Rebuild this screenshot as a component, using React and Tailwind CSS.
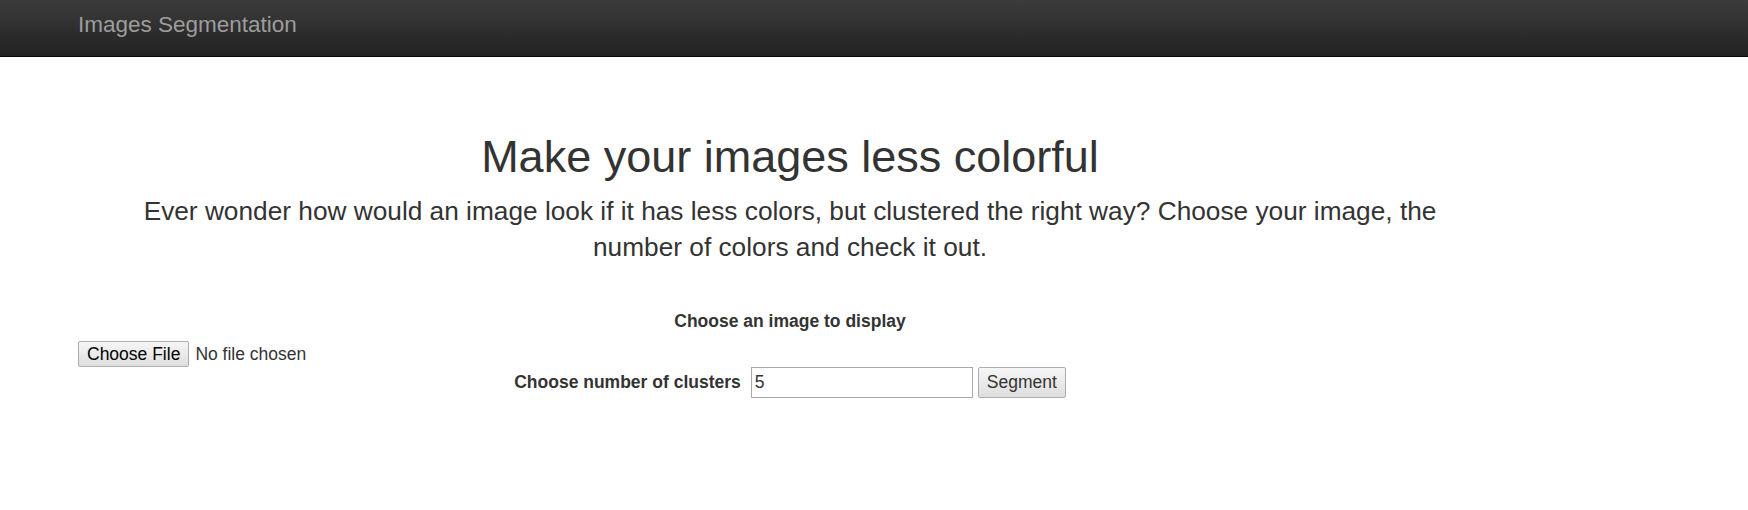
import React, { useState } from 'react';

const App = () => {
    const [clusters, setClusters] = useState('5');

    return (
        <div className="min-h-[510px] bg-white text-[#333] font-['Liberation_Sans',Arial,sans-serif]">
            <nav className="h-[57px] border-b border-[#080808] bg-linear-to-b from-[#3c3c3c] to-[#222]">
                <div className="pl-[78px] pt-[12px]">
                    <a href="#" className="text-[22.5px] leading-[25px] text-[#9d9d9d]">
                        Images Segmentation
                    </a>
                </div>
            </nav>

            <div className="ml-[78px] w-[1424px]">
                <h1 className="mt-[75px] text-center text-[45px] leading-[49.5px] font-normal">
                    Make your images less colorful
                </h1>
                <p className="mx-auto mt-[11px] w-[1340px] text-center text-[26.25px] leading-[36.75px]">
                    Ever wonder how would an image look if it has less colors, but clustered the right way? Choose your image, the number of colors and check it out.
                </p>

                <form onSubmit={(e) => e.preventDefault()}>
                    <div className="mt-[43px] text-center text-[17.5px] leading-[25px] font-bold">
                        Choose an image to display
                    </div>
                    <div className="mt-[7px] flex items-center">
                        <button
                            type="button"
                            className="h-[26px] px-[8px] rounded-[2px] border border-[#adadad] bg-linear-to-b from-[#f6f6f6] to-[#dedede] text-[17.5px] leading-[22px] text-black"
                        >
                            Choose File
                        </button>
                        <span className="ml-[6px] text-[17.5px] leading-[25px]">No file chosen</span>
                    </div>
                    <div className="flex items-center justify-center">
                        <label className="text-[17.5px] leading-[25px] font-bold">Choose number of clusters</label>
                        <input
                            type="text"
                            value={clusters}
                            onChange={(e) => setClusters(e.target.value)}
                            className="ml-[10px] h-[31px] w-[222px] border border-[#a9a9a9] px-[3px] text-[17.5px] text-[#333] focus:outline-none"
                        />
                        <button
                            type="submit"
                            className="ml-[5px] h-[31px] w-[88px] rounded-[2px] border border-[#adadad] bg-linear-to-b from-[#f6f6f6] to-[#dedede] pb-[2px] text-[17.5px] leading-[22px] text-[#333]"
                        >
                            Segment
                        </button>
                    </div>
                </form>
            </div>
        </div>
    );
};

export default App;
